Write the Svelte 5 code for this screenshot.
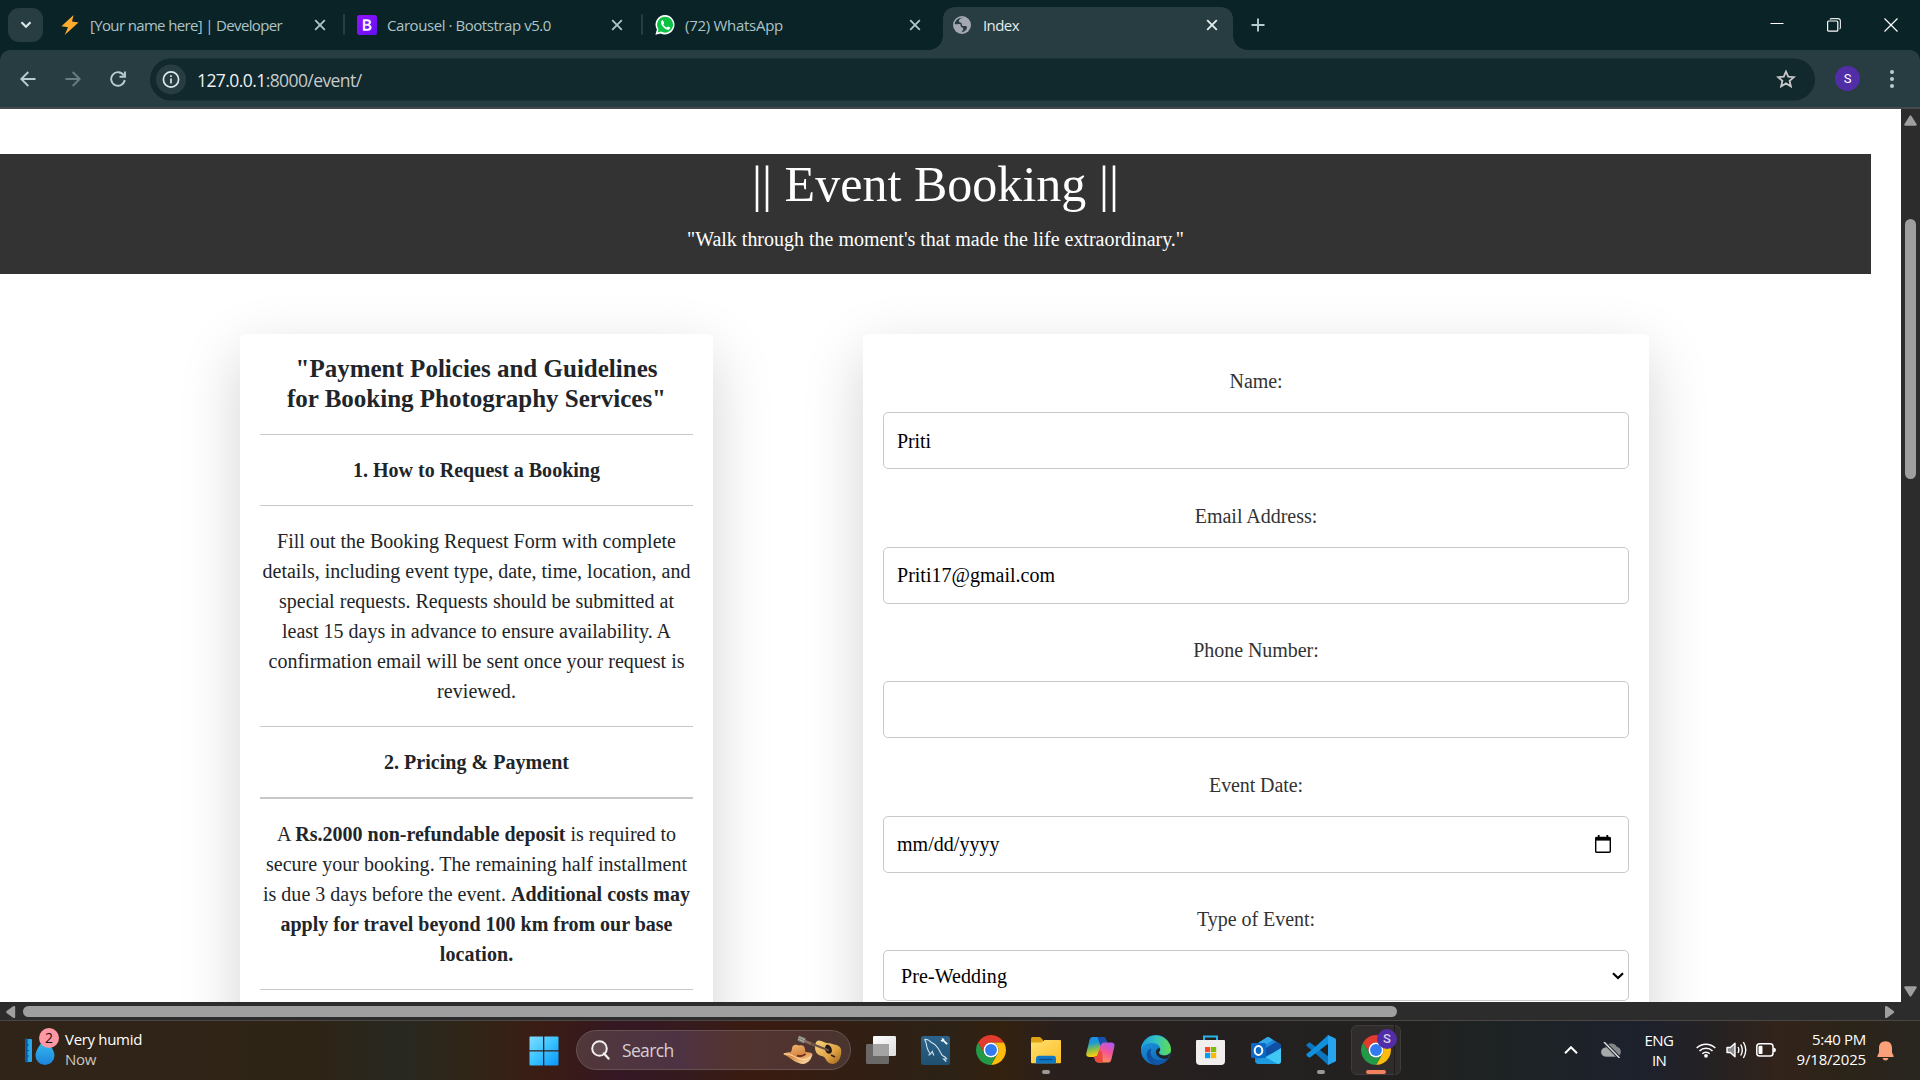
<script>
  const tabs = [
    { icon: 'bolt', title: '[Your name here] | Developer', width: 192 },
    { icon: 'bootstrap', title: 'Carousel · Bootstrap v5.0', width: 164 },
    { icon: 'whatsapp', title: '(72) WhatsApp', width: 98 },
    { icon: 'globe', title: 'Index', width: 36, active: true }
  ];

  const fields = [
    { label: 'Name:', value: 'Priti', labelWidth: 53, width: 34 },
    { label: 'Email Address:', value: 'Priti17@gmail.com', labelWidth: 122.5, width: 158 },
    { label: 'Phone Number:', value: '', labelWidth: 125.5, width: 0 },
    { label: 'Event Date:', value: 'mm/dd/yyyy', kind: 'date', labelWidth: 94, width: 102.5 },
    { label: 'Type of Event:', value: 'Pre-Wedding', kind: 'select', labelWidth: 118, width: 106 }
  ];

  const apps = ['taskview', 'mysql', 'chrome', 'folder', 'copilot', 'edge', 'store', 'outlook', 'vscode', 'chromeActive'];

  // Spreads letter spacing so a label fills its intended width.
  function fit(node, width) {
    if (!width) return;
    const natural = node.getBoundingClientRect().width;
    const count = node.textContent.length;
    if (natural && count > 1) node.style.letterSpacing = `${(width - natural) / count}px`;
  }
</script>

{#snippet chromeLogo()}
  <svg width="30" height="30" viewBox="2 2 44 44">
    <path fill="#e33b2e" d="M24 13H43.05A22 22 0 0 0 4.95 13L14.47 29.5A11 11 0 0 1 24 13Z" />
    <path fill="#fbbc0c" d="M33.53 29.5 24 46A22 22 0 0 0 43.05 13H24A11 11 0 0 1 33.53 29.5Z" />
    <path fill="#229a48" d="M14.47 29.5 4.95 13A22 22 0 0 0 24 46L33.53 29.5A11 11 0 0 1 14.47 29.5Z" />
    <circle cx="24" cy="24" r="11" fill="#fff" />
    <circle cx="24" cy="24" r="8.7" fill="#2f7bef" />
  </svg>
{/snippet}

{#snippet favicon(name)}
  {#if name === 'bolt'}
    <svg width="20" height="20" viewBox="0 0 20 20"><path d="M13.6 0 1.5 11.2l6.500 1L4.7 20 18.500 7.600l-6.500-1z" fill="#ffab2d" /></svg>
  {:else if name === 'bootstrap'}
    <svg width="20" height="20" viewBox="0 0 20 20">
      <defs><linearGradient id="bs" x1="0" y1="0" x2="1" y2="1"><stop offset="0" stop-color="#9013fe" /><stop offset="1" stop-color="#6610f2" /></linearGradient></defs>
      <rect width="20" height="20" rx="2.5" fill="url(#bs)" />
      <path d="M6.2 4.6h4.5q3.1 0 3.1 2.6 0 1.9-1.8 2.5 2.3.5 2.3 2.8 0 3-3.5 3H6.2zM7.9 6v3.2h2.3q1.9 0 1.9-1.6T10.3 6zM7.900 10.500V14h2.700q2 0 2-1.800 0-1.700-2.100-1.700z" fill="#fff" stroke="#fff" stroke-width=".5" />
    </svg>
  {:else if name === 'whatsapp'}
    <svg width="20" height="20" viewBox="0 0 20 20">
      <path d="M10.2 0a9.6 9.6 0 0 0-8.3 14.5L.4 19.8l5.1-1.4A9.7 9.7 0 1 0 10.2 0z" fill="#fff" />
      <path d="M10.2 1.7a8 8 0 0 0-6.7 12.5l-.8 3.2 3.3-.8a8 8 0 1 0 4.2-14.9z" fill="#0bc144" />
      <path d="M6.9 5.5c-1.5 1-1.4 3 .5 5.500 2 2.600 4.900 4.300 6.600 3.500 1.200-.6 1.300-1.700 1.100-2l-2-1.100c-.4-.1-1 1.200-1.400 1-1.500-.6-2.600-1.700-3.300-3 0-.5.9-.8.7-1.400l-.9-2.200c-.2-.5-.8-.6-1.300-.3z" fill="#fff" />
    </svg>
  {:else}
    <svg width="18" height="18" viewBox="0 0 18 18">
      <circle cx="9" cy="9" r="9" fill="#a3a8b3" />
      <path d="M10.300 1.900c-3 .2-4.600 1.700-4.400 3.300.2 1.300 1.900 1 2.700 2 .8 1.200-.3 1.800.8 2.500 1.300.8 3-.3 4.200.7 1.100 1-.2 3-1.300 4.200-.9 1-2.600 1.600-3.900 1.600 1-1.300 2-2.100 1.800-3.500-.1-1.300-1.500-1-2.200-1.900-.8-1 .1-2.200-1-2.700C5.600 7.400 3.300 8.700 1.700 8.100 2 4.600 5.500 1 10.300 1.900z" fill="#283d41" />
    </svg>
  {/if}
{/snippet}

{#snippet appIcon(name)}
  {#if name === 'taskview'}
    <svg width="30" height="28" viewBox="0 0 30 28">
      <defs><linearGradient id="tv" x2="1" y2="1"><stop stop-color="#fff" /><stop offset="1" stop-color="#dcdcdc" /></linearGradient></defs>
      <rect x="0" y="8" width="23" height="20" rx="1.200" fill="#6b6967" />
      <rect x="7" y="0" width="23" height="20" rx="1.200" fill="url(#tv)" />
      <rect x="7" y="8" width="16" height="12" fill="#a4a3a3" />
    </svg>
  {:else if name === 'mysql'}
    <svg width="29" height="29" viewBox="0 0 29 29">
      <defs><linearGradient id="my" x2="0" y2="1"><stop stop-color="#2c638b" /><stop offset="1" stop-color="#1f506f" /></linearGradient></defs>
      <rect width="29" height="29" rx="2.500" fill="url(#my)" />
      <path d="M9.500 18c-2.800-3-3.700-6.600-4.300-10.500C4.800 5.500 3.200 3.600 4 3.300c2.800.2 4.800 1.300 6 3 4.500 1.700 7.300 5.500 9.500 10.200l1.800 3c1.900.8 3.500 1.800 4.400 3.200l-3.200.3 2.800 2.500M9.500 18l-2 1.200M9.500 18l1.800-2.500 1.500 4" fill="none" stroke="#d4e6f0" stroke-width="1.100" />
      <path d="M20.500 2.500c1.600-.9 2.800.2 3 1.900l3.300 3.100-1.300 1.300-3.300-3.200c-1.400.3-2.400-.6-2.500-1.700l1.600.4z" fill="#fff" />
    </svg>
  {:else if name === 'chrome'}
    {@render chromeLogo()}
  {:else if name === 'folder'}
    <svg width="30" height="27" viewBox="0 0 30 27">
      <defs><linearGradient id="fo" x2="1" y2="1"><stop stop-color="#ffe06f" /><stop offset="1" stop-color="#fdbd28" /></linearGradient></defs>
      <path d="M0 1.500Q0 0 1.500 0H9l3 3v3H0z" fill="#dfa213" />
      <path d="M0 5.500h10.500L13.500 3H29q1 0 1 1v21.500q0 .8-1 .8H1q-1 0-1-1z" fill="url(#fo)" />
      <path d="M5 26.500v-4.700q0-3 3-3h14q3 0 3 3v4.700z" fill="#1077c5" />
      <path d="M8.500 22.500h13" stroke="#0a4d87" stroke-width="1.300" />
    </svg>
  {:else if name === 'copilot'}
    <svg width="29" height="26" viewBox="0 0 29 26">
      <defs>
        <linearGradient id="c1" x2=".2" y2="1"><stop stop-color="#1c8df5" /><stop offset=".35" stop-color="#1b9ad0" /><stop offset=".65" stop-color="#86bd4c" /><stop offset="1" stop-color="#ffd00c" /></linearGradient>
        <linearGradient id="c2" x1=".8" x2=".3" y2="1"><stop stop-color="#b057f4" /><stop offset=".45" stop-color="#f25593" /><stop offset="1" stop-color="#ff9a52" /></linearGradient>
      </defs>
      <path d="M6.500 0h10q2.800 0 3.600 3l.8 2.500h-3q-2 0-2.600 2l-3 9.500q-1 3-4 3H3.500Q-.5 20 .4 16L3.500 3Q4.300 0 6.500 0z" fill="url(#c1)" />
      <path d="M11.500 0h5q2.800 0 3.600 3l.8 2.500h-3q-2 0-2.600 2l-.7 2z" fill="#164fb0" />
      <path d="M22.500 25.500h-10q-2.800 0-3.600-3L8 19.500h1q2 0 2.600-2l3-9q1-3 4-3h6.500q4.200 0 3.200 4.200L25.500 22q-.8 3.500-3 3.500z" fill="url(#c2)" />
      <path d="M17 25.500h-4.500q-2.800 0-3.600-3L8 19.500h1q2 0 2.600-2l1.500-4 3 1z" fill="#ea493e" />
    </svg>
  {:else if name === 'edge'}
    <svg width="30" height="30" viewBox="0 0 30 30">
      <defs>
        <linearGradient id="e1" x2="1"><stop stop-color="#199bd9" /><stop offset=".5" stop-color="#35c3c2" /><stop offset="1" stop-color="#62df48" /></linearGradient>
        <linearGradient id="e2" x2=".5" y2="1"><stop stop-color="#1d9fe3" /><stop offset="1" stop-color="#0f67b8" /></linearGradient>
      </defs>
      <circle cx="15" cy="15" r="15" fill="url(#e2)" />
      <path d="M1.500 9A15 15 0 0 1 30 14.500c0 4-3 6-6.500 6-3 0-5.500-1.200-5.500-3 0-1 1.200-1.500 1.200-3.500 0-3-3-6-8-6C6.500 8 2.500 10 0 14.500c0-2 .5-4 1.500-5.500z" fill="url(#e1)" />
      <path d="M10.500 13.500c-3 5 1 12 8 12 3.500 0 6.500-1 8.500-2.500A15 15 0 0 1 15 30C9 29 5.500 24 5.800 19c.2-3 2-5 4.700-5.500z" fill="#10509e" />
      <path d="M19.200 14c0 2-1.200 2.500-1.200 3.500 0 1.800 2.500 3 5.500 3 2.500 0 5-1.200 6-3.200-.5 3-1.500 4.500-2.800 6-3 1.200-6.500.5-9-1.500-4-2.500-3.500-7.800.5-9z" fill="#21252a" />
      <path d="M10.300 22.500c2 3 5 3.500 8.200 3.300 3-.2 6.500-1 8.500-2.800A15 15 0 0 1 17 29.800c-4-1-6-4-6.700-7.300z" fill="#1158a7" />
    </svg>
  {:else if name === 'store'}
    <svg width="29" height="30" viewBox="0 0 29 30">
      <path d="M8 6V1.500h13V6" fill="none" stroke="#28b4e8" stroke-width="2" />
      <path d="M0 6q0-1 1-1h27q1 0 1 1v20q0 4-4 4H4q-4 0-4-4z" fill="#f0efee" />
      <path d="M9 12h5.200v5.200H9z" fill="#f04d26" /><path d="M15 12h5.200v5.200H15z" fill="#80bb03" />
      <path d="M9 18h5.200v5.200H9z" fill="#069fe8" /><path d="M15 18h5.200v5.200H15z" fill="#fdb900" />
    </svg>
  {:else if name === 'outlook'}
    <svg width="30" height="27" viewBox="0 0 30 27">
      <path d="M4 8 16 .3q1-.5 2 0L29 7q1 .6 1 2v15q0 3-3 3H8q-4 0-4-4z" fill="#1b87d8" />
      <path d="M4 8 16 .3q1-.5 2 0L22 3 8 12z" fill="#32a8e8" />
      <path d="m10 14 15-9 4 2q1 .6 1 2v3L15 19z" fill="#0f4fa5" />
      <path d="M12 22 30 11v13q0 3-3 3H8z" fill="#40c7f4" />
      <path d="m14 20 13 7H8q-3 0-4-3z" fill="#1e9ae0" />
      <rect y="6" width="15" height="15" rx="1.500" fill="#0b68c4" />
      <ellipse cx="7.500" cy="13.500" rx="3.800" ry="4.400" fill="none" stroke="#fff" stroke-width="2" />
    </svg>
  {:else if name === 'vscode'}
    <svg width="30" height="30" viewBox="0 0 30 30">
      <path d="M22 0 6 15 22 30 22 22 13 15 22 8z" fill="#0b7bc4" />
      <path d="m1.500 8.500 1.600-.9q.7-.3 1.300.2L23 22v7.500L.6 11q-.8-.7 0-1.300z" fill="#0b75bd" />
      <path d="m1.500 21.500 1.600.9q.7.300 1.300-.2L23 8V.5L.6 19q-.8.700 0 1.300z" fill="#1190dd" />
      <path d="M22 0 29 3.200q1 .5 1 1.500v20.600q0 1-1 1.500L22 30z" fill="#28a4ef" />
    </svg>
  {:else}
    <span class="chrome-badged">{@render chromeLogo()}<span class="badge profile">S</span></span>
  {/if}
{/snippet}

<div class="screen">
  <header class="tabstrip">
    <span class="tab-search">
      <svg width="12" height="8" viewBox="0 0 12 8"><path d="m1.500 1.300 4.500 4.500 4.500-4.500" fill="none" stroke="#dbe6e7" stroke-width="2.200" /></svg>
    </span>
    <div class="tabs">
      {#each tabs as tab}
        <div class="tab" class:active={tab.active}>
          <span class="fav">{@render favicon(tab.icon)}</span>
          <span class="tab-title"><span use:fit={tab.width}>{tab.title}</span></span>
          <svg class="close" width="12" height="12" viewBox="0 0 12 12"><path d="m1.200 1.200 9.600 9.600m0-9.600-9.600 9.600" stroke="currentColor" stroke-width="1.900" /></svg>
        </div>
      {/each}
    </div>
    <svg class="plus" width="14" height="14" viewBox="0 0 14 14"><path d="M7 .5v13M.5 7h13" stroke="#b5cbce" stroke-width="1.900" /></svg>
    <div class="window-controls">
      <svg width="14" height="14" viewBox="0 0 14 14"><path d="M.5 5.500h13" stroke="#fff" stroke-width="1" /></svg>
      <svg width="14" height="14" viewBox="0 0 14 14"><rect x=".6" y="3" width="10.200" height="10.200" rx="1" fill="none" stroke="#fff" stroke-width="1.200" /><path d="M3 1.500Q3.300.6 4.500.6H11Q13.400.6 13.400 3v6.500q0 1.200-.9 1.500" fill="none" stroke="#e5ebeb" stroke-width="1.100" /></svg>
      <svg width="14" height="14" viewBox="0 0 14 14"><path d="m.5.500 13 13m0-13-13 13" stroke="#fff" stroke-width="1.200" /></svg>
    </div>
  </header>

  <div class="toolbar-wrap">
    <div class="toolbar">
      <svg width="16" height="16" viewBox="0 0 16 16"><path d="M15.500 8H1.500M8.300 1 1.300 8l7 7" fill="none" stroke="#b7cdd0" stroke-width="1.900" /></svg>
      <svg width="16" height="16" viewBox="0 0 16 16"><path d="M.5 8h14M7.700 1l7 7-7 7" fill="none" stroke="#6a7d80" stroke-width="1.900" /></svg>
      <svg width="16" height="16" viewBox="0 0 16 16"><path d="M13.700 4.300A6.800 6.800 0 1 0 14.700 9M15 .5v5.300H9.500" fill="none" stroke="#b7cdd0" stroke-width="1.900" /></svg>
      <div class="omnibox">
        <span class="site-info">
          <svg width="18" height="18" viewBox="0 0 18 18"><circle cx="9" cy="9" r="7.600" fill="none" stroke="#dce7e8" stroke-width="1.700" /><path d="M9 8v5M9 4.800v1.700" stroke="#dce7e8" stroke-width="1.700" /></svg>
        </span>
        <span class="url"><span use:fit={164.5}><b>127.0.0.1</b>:8000/event/</span></span>
        <svg width="20" height="19" viewBox="0 0 20 19"><path d="m10 2 2.200 5.200 5.700.5-4.300 3.700 1.300 5.500-4.900-3-4.900 3 1.300-5.500L2.100 7.700l5.700-.5z" fill="none" stroke="#c7c9ca" stroke-width="1.800" /></svg>
      </div>
      <span class="avatar">S</span>
      <svg class="dots" width="6" height="20" viewBox="0 0 6 20"><g fill="#b7cdd0"><circle cx="3" cy="3" r="2" /><circle cx="3" cy="10" r="2" /><circle cx="3" cy="17" r="2" /></g></svg>
    </div>
  </div>

  <div class="browser-body">
    <main class="page">
      <section class="banner">
        <h1><span use:fit={367}>|| Event Booking ||</span></h1>
        <p><span use:fit={497}>"Walk through the moment's that made the life extraordinary."</span></p>
      </section>
      <div class="columns">
        <article class="card policy">
          <h2><span use:fit={362}>"Payment Policies and Guidelines</span><br /><span use:fit={379}>for Booking Photography Services"</span></h2>
          <hr />
          <h3><span use:fit={247}>1. How to Request a Booking</span></h3>
          <hr />
          <p>
            <span use:fit={399}>Fill out the Booking Request Form with complete</span><br />
            <span use:fit={428}>details, including event type, date, time, location, and</span><br />
            <span use:fit={395}>special requests. Requests should be submitted at</span><br />
            <span use:fit={389}>least 15 days in advance to ensure availability. A</span><br />
            <span use:fit={416}>confirmation email will be sent once your request is</span><br />
            <span use:fit={79}>reviewed.</span>
          </p>
          <hr />
          <h3><span use:fit={185}>2. Pricing &amp; Payment</span></h3>
          <hr class="thick" />
          <p>
            <span use:fit={399}>A <strong>Rs.2000 non-refundable deposit</strong> is required to</span><br />
            <span use:fit={421}>secure your booking. The remaining half installment</span><br />
            <span use:fit={427}>is due 3 days before the event. <strong>Additional costs may</strong></span><br />
            <strong use:fit={392}>apply for travel beyond 100 km from our base</strong><br />
            <strong use:fit={73.5}>location.</strong>
          </p>
          <hr />
        </article>

        <form class="card form">
          {#each fields as field}
            <div class="group">
              <span class="label"><span use:fit={field.labelWidth}>{field.label}</span></span>
              <div class="input {field.kind ?? 'text'}">
                <span use:fit={field.width}>{field.value}</span>
                {#if field.kind === 'date'}
                  <svg width="16" height="18" viewBox="0 0 16 18"><path d="M3.700 0v3M12.300 0v3" stroke="#000" stroke-width="1.800" /><rect x=".7" y="2.500" width="14.600" height="14.700" rx="1" fill="none" stroke="#000" stroke-width="1.400" /><path d="M.7 2h14.600v3.600H.7z" /></svg>
                {:else if field.kind === 'select'}
                  <svg width="12" height="8" viewBox="0 0 12 8"><path d="m1 1.200 5 4.800 5-4.800" fill="none" stroke="#000" stroke-width="2.200" /></svg>
                {/if}
              </div>
            </div>
          {/each}
        </form>
      </div>
    </main>
    <div class="vscroll">
      <svg width="13" height="11" viewBox="0 0 13 11"><path d="M5.500 1q1-1.300 2 0l5 8q.8 1.700-1 1.700h-10q-1.800 0-1-1.700z" fill="#9f9f9f" /></svg>
      <span class="vthumb"></span>
      <svg width="13" height="11" viewBox="0 0 13 11"><path d="M5.500 10q1 1.300 2 0l5-8q.8-1.700-1-1.700h-10Q-.3.300.5 2z" fill="#9f9f9f" /></svg>
    </div>
  </div>
  <div class="hscroll">
    <svg width="10" height="12" viewBox="0 0 10 12"><path d="M.6 5q-1 1 0 2l6.500 4.700Q9.200 12.500 9.200 11V1Q9.200-.5 7.100.3z" fill="#9f9f9f" /></svg>
    <span class="hthumb"></span>
    <svg class="hright" width="10" height="12" viewBox="0 0 10 12"><path d="M8.600 5q1 1 0 2l-6.500 4.700Q0 12.500 0 11V1Q0-.5 2.100.3z" fill="#9f9f9f" /></svg>
  </div>

  <footer class="taskbar">
    <div class="weather">
      <div class="weather-icon">
        <svg width="30" height="28" viewBox="0 0 30 28">
          <defs><linearGradient id="dr" x2="0" y2="1"><stop stop-color="#3cc6f2" /><stop offset="1" stop-color="#1c83dc" /></linearGradient></defs>
          <rect x="0" y="2" width="7" height="23" rx="1" fill="#29a7e6" /><path d="M.8 2h1.200v23H.8zM2 8h2M2 13.500h2M2 19h2" fill="#0b579b" stroke="#0b579b" stroke-width="1.200" />
          <path d="M20 0C16 7 10.500 13 10.500 18.500a9.500 9.500 0 0 0 19 0C29.500 13 24 7 20 0z" fill="url(#dr)" />
        </svg>
        <span class="badge count">2</span>
      </div>
      <div class="weather-text"><span><span use:fit={77}>Very humid</span></span><span class="dim"><span use:fit={31}>Now</span></span></div>
    </div>
    <div class="dock">
      <svg class="start" width="30" height="30" viewBox="0 0 30 30">
        <defs><linearGradient id="wn" gradientUnits="userSpaceOnUse" x1="0" y1="0" x2="30" y2="30"><stop stop-color="#83deff" /><stop offset=".5" stop-color="#38c3ff" /><stop offset="1" stop-color="#0893fb" /></linearGradient></defs>
        <path d="M1.500.5H14v13.700H.5V1.500q0-1 1-1zM15.300.5h13.200q1 0 1 1v12.700H15.300zM.5 15.500H14v14H1.500q-1 0-1-1zM15.300 15.500h14.200v13q0 1-1 1H15.300z" fill="url(#wn)" />
      </svg>
      <div class="search">
        <svg width="19" height="20" viewBox="0 0 19 20"><circle cx="8.500" cy="8.500" r="7.300" fill="#8a7c80" fill-opacity=".35" stroke="#f2eeee" stroke-width="2" /><path d="m13 13.500 4.500 5" stroke="#f2eeee" stroke-width="2.400" stroke-linecap="round" /></svg>
        <span class="search-text"><span use:fit={51.5}>Search</span></span>
        <svg class="art" width="60" height="30" viewBox="0 0 60 30">
          <defs>
            <linearGradient id="ht" x2=".6" y2="1"><stop stop-color="#f4bd7c" /><stop offset=".6" stop-color="#d98b45" /><stop offset="1" stop-color="#f8cc93" /></linearGradient>
            <linearGradient id="gt" x2="1" y2="1"><stop stop-color="#f6d07e" /><stop offset=".6" stop-color="#dfa343" /><stop offset="1" stop-color="#9b5c1c" /></linearGradient>
          </defs>
          <path d="M18 4.500 43 15" stroke="#8e6a5a" stroke-width="2.600" />
          <path d="m16 .5 7 2.800-2 5.200-6.500-2.800z" fill="#7d7a74" /><path d="m15.500 2 6.500 2.800m-7.200-.8 6.400 2.700" stroke="#c6beb0" stroke-width=".8" />
          <path d="M32 12c0-3 1-6.500 4-6.500 3.500 0 5 2.500 8 2.500 3.500 0 4.500 1 7 1.500 4.500.5 7.800 3 7.300 7.500C58 22 56 28.500 50 29c-4 0-6.500-3-8-6-1.500-2.500-5-1.500-7.500-4-2-2-2.500-4.500-2.500-7z" fill="url(#gt)" />
          <path d="M44 9.500c3 .3 5.500 4 4.800 7-.6 2.500-3 2.800-4.800 1.500-2.500-2-2.800-7 0-8.500z" fill="#241a18" />
          <path d="m28 8.500 18 7" stroke="#675046" stroke-width="2.200" /><path d="m48 20 4 2" stroke="#382115" stroke-width="1.600" />
          <path d="M0 19c4-2 6-1.500 8-2 1.500-3 .5-6 3.500-7 2-.6 4 .8 6 .3 3.500-.8 4.500 2.200 5 6.700 3 .5 5.500 0 7 2-.5 4-3.500 9-9 10C13 29 7 22 0 19z" fill="url(#ht)" />
          <path d="M14 20.500c3 1.200 6 .5 8.500-1.500" fill="none" stroke="#73301c" stroke-width="2" /><path d="M1 19c8-1 13 6 20 5.500 3 0 5.500-1.500 7.500-4" fill="none" stroke="#ffe0b0" stroke-width="1" />
        </svg>
      </div>
      <div class="apps">
        {#each apps as app}
          <div class="app" class:current={app === 'chromeActive'} class:running={app === 'folder' || app === 'vscode'}>{@render appIcon(app)}</div>
        {/each}
      </div>
    </div>
    <div class="tray">
      <svg class="chev" width="14" height="8" viewBox="0 0 14 8"><path d="m1 7.200 6-6 6 6" fill="none" stroke="#fff" stroke-width="2" /></svg>
      <svg class="cloud" width="21" height="16" viewBox="0 0 21 16"><path d="M4.500 14.500a4.500 4.500 0 0 1-.3-9A6.500 6.500 0 0 1 16 5a4.900 4.900 0 0 1 .3 9.500z" fill="#858789" /><path d="M4 6c4 0 5.500 1.500 12 8.500H4.500C-1 14 0 6 4 6z" fill="#a7a9ab" /><path d="m3 0 15 15.500" stroke="#222733" stroke-width="3.500" /><path d="m3 0 15.500 16" stroke="#e0e1e2" stroke-width="1.400" /></svg>
      <div class="lang"><span><span use:fit={29}>ENG</span></span><span><span use:fit={14}>IN</span></span></div>
      <svg class="wifi" width="20" height="16" viewBox="0 0 20 16"><g fill="none" stroke="#fff" stroke-width="1.500"><path d="M.7 6a13.200 13.200 0 0 1 18.600 0M3.500 9a9.200 9.200 0 0 1 13 0M6.300 11.800a5.300 5.300 0 0 1 7.400 0" /></g><circle cx="10" cy="13.800" r="1.900" fill="#fff" /></svg>
      <svg class="volume" width="21" height="18" viewBox="0 0 21 18"><g fill="none" stroke="#fff" stroke-width="1.400"><path d="M1 6.500h3.300L9 2.300v13.400l-4.700-4.200H1z" fill="#8b8b90" stroke-linejoin="round" /><path d="M12 6q1.700 3 0 6M14.700 3.500q3.200 5.500 0 11M17.400 1q4.700 8 0 16" /></g></svg>
      <svg class="battery" width="20" height="14" viewBox="0 0 20 14"><rect x=".8" y=".8" width="16.200" height="12.200" rx="2.800" fill="none" stroke="#fff" stroke-width="1.500" /><rect x="2.500" y="2.800" width="4" height="8.200" rx="1" fill="#fff" /><path d="M17.300 4.500Q20 4.800 20 7t-2.700 2.500z" fill="#fff" /></svg>
      <div class="clock"><span><span use:fit={54}>5:40 PM</span></span><span><span use:fit={69.5}>9/18/2025</span></span></div>
      <svg class="bell" width="17" height="20" viewBox="0 0 17 20"><path d="M8.500.2c-4 0-6.500 2.800-6.500 6.500v4.800L.3 15q-.3 1 .7 1h15q1 0 .7-1L15 11.500V6.700C15 3 12.500.2 8.500.2z" fill="#fca07a" /><path d="M5.500 17h6q-.8 2.500-3 2.500t-3-2.500z" fill="#fca07a" /></svg>
    </div>
  </footer>
</div>

<style>
  :global(body) { margin: 0; overflow: hidden; }
  .screen { width: 1920px; height: 1080px; display: flex; flex-direction: column; overflow: hidden; background: #fff; font-family: "Open Sans", "Noto Sans", sans-serif; font-size: 15px; white-space: nowrap; }
  svg { display: block; flex: none; }

  .tabstrip { flex: none; height: 50px; background: #0a2327; display: flex; align-items: center; box-sizing: border-box; padding: 0 22px 0 8px; }
  .tab-search { width: 35px; height: 34px; border-radius: 11px; background: #283d41; display: flex; align-items: center; justify-content: center; }
  .tabs { display: flex; align-self: stretch; align-items: flex-end; margin-left: 12px; }
  .tab { position: relative; display: flex; align-items: center; box-sizing: border-box; height: 43px; padding: 0 19px 7px 4px; color: #adc3c6; }
  .tab:first-child { width: 289px; padding-left: 5px; padding-right: 18px; }
  .tab:nth-child(2) { width: 298px; padding-left: 13px; }
  .tab:nth-child(3) { width: 289px; padding-left: 13px; padding-right: 10px; }
  .tab:nth-child(-n+2)::after { content: ""; position: absolute; right: -1px; top: 7px; width: 2px; height: 21px; border-radius: 1px; background: #283d41; }
  .tab.active { width: 290px; padding: 0 15px 7px 10px; margin-left: 12px; background: #283d41; border-radius: 12px 12px 0 0; color: #e2edee; }
  .tab.active::before, .tab.active::after { content: ""; position: absolute; bottom: 0; width: 14px; height: 14px; }
  .tab.active::before { left: -14px; background: radial-gradient(circle at 0 0, transparent 13.500px, #283d41 14px); }
  .tab.active::after { right: -14px; background: radial-gradient(circle at 100% 0, transparent 13.500px, #283d41 14px); }
  .fav { width: 20px; margin-right: 10px; }
  .tab-title { flex: 1; line-height: 20px; padding-bottom: 1px; }
  .plus { margin-left: 18px; }
  .window-controls { margin-left: auto; display: flex; gap: 43px; }

  .toolbar-wrap { flex: none; height: 59px; background: #0a2327; }
  .toolbar { height: 59px; box-sizing: border-box; border-bottom: 2px solid #45494d; border-radius: 10px 10px 0 0; background: #283d41; display: flex; align-items: center; padding: 0 25px 0 20px; gap: 29px; }
  .omnibox { flex: 1; height: 42px; box-sizing: border-box; border-radius: 21px; background: #11282d; display: flex; align-items: center; margin: 0 -9px 0 -12px; padding: 0 19px 0 6px; transform: translateY(.5px); }
  .toolbar > svg:nth-child(3) { margin-right: 7px; }
  .site-info { width: 30px; height: 30px; border-radius: 50%; background: #283d41; display: flex; align-items: center; justify-content: center; }
  .url { flex: 1; margin-left: 11px; font-size: 17.500px; line-height: 24px; color: #c7cbcb; }
  .url b { font-weight: 400; color: #eef2f2; }
  .avatar { width: 25px; height: 25px; border-radius: 50%; background: #512da8; color: #fff; font: 13px/25px Roboto, sans-serif; text-align: center; }

  .browser-body { flex: none; height: 893px; display: flex; overflow: hidden; }
  .page { width: 1901px; box-sizing: border-box; padding-top: 45px; overflow: hidden; background: #fff; font-family: "Liberation Serif", "Times New Roman", serif; font-size: 20px; line-height: 30px; color: #212529; }
  .banner { width: 1871px; height: 120px; background: #333; color: #fff; text-align: center; }
  h1, h2, h3, p { margin: 0; }
  h1 { font-size: 50px; line-height: 60px; font-weight: 400; margin-bottom: 10px; }
  .columns { display: flex; align-items: flex-start; gap: 150px; padding: 60px 0 0 240px; }
  .card { box-sizing: border-box; height: 900px; border-radius: 5px; background: #fff; box-shadow: 0 20px 60px rgba(0, 0, 0, .175); text-align: center; padding: 20px; }
  .policy { width: 473px; }
  h2 { font-size: 25px; line-height: 30px; }
  h3 { font-size: 20px; line-height: 30px; }
  hr { height: 1px; border: 0; margin: 20px 0; background: #c7c8c9; }
  hr.thick { height: 2px; }
  .form { width: 786px; padding-top: 32px; }
  .group { display: flex; flex-direction: column; height: 134.500px; }
  .label { height: 46px; color: #333; }
  .input { box-sizing: border-box; height: 57px; border: 1px solid #c9c9c9; border-radius: 5px; padding: .25px 12.500px 0 13px; color: #000; display: flex; align-items: center; justify-content: space-between; text-align: left; }
  .input.date { padding-right: 17px; }
  .input.select { height: 51px; padding: 0 4px 0 17px; }

  .vscroll { width: 19px; background: #2c2c2c; display: flex; flex-direction: column; align-items: center; box-sizing: border-box; padding: 6px 0 5px; }
  .vthumb { width: 11px; height: 260px; border-radius: 6px; background: #9f9f9f; margin: 93px 0 auto; }
  .hscroll { flex: none; height: 18px; background: #2c2c2c; display: flex; align-items: center; padding: 1px 25px 0 6px; box-sizing: border-box; }
  .hthumb { width: 1374px; height: 11px; border-radius: 6px; background: #9f9f9f; margin: -1px 0 0 7px; }
  .hright { margin-left: auto; }

  .taskbar { flex: 1; box-sizing: border-box; border-top: 1px solid #4a4744; display: flex; color: #fff; background: linear-gradient(90deg, #302418 0, #2e2416 320px, #282821 400px, #302516 470px, #3b1c14 545px, #341724 620px, #351b1e 690px, #3b1b11 750px, #321f14 860px, #2c2216 950px, #34210f 1000px, #29201d 1060px, #242020 1250px, #212120 1430px, #1d2324 1500px, #1d212d 1640px, #262222 1720px, #33231a 1780px, #2b2419 1850px, #292520 1920px); }
  .weather { display: flex; width: 516px; padding: 7px 0 0 25px; box-sizing: border-box; }
  .weather-icon { position: relative; padding-top: 9px; width: 30px; height: 28px; }
  .badge { position: absolute; border-radius: 50%; width: 20px; height: 20px; text-align: center; line-height: 20px; }
  .count { left: 14px; top: 0; background: #ff98a4; color: #1b0d0e; font-size: 14px; }
  .weather-text { margin-left: 10px; display: flex; flex-direction: column; padding-top: 1px; }
  .weather-text > span, .lang > span, .clock > span { line-height: 20px; }
  .dim { color: #cbc5bf; }
  .dock { display: flex; padding-top: 9px; }
  .start { margin: 6px 17px 0 13px; }
  .search { width: 275px; height: 40px; border-radius: 20px; box-sizing: border-box; border: 1px solid #66534f; background: linear-gradient(90deg, #50373a, #50363f 40px, #4d3243 100px, #54342f 160px, #4d3330 240px, #49352f); display: flex; align-items: center; padding: 0 7px 0 14px; }
  .search-text { flex: 1; margin-left: 12px; font-size: 17.500px; line-height: 24px; color: #d8cfd1; }
  .apps { display: flex; margin: -5px 0 0 2px; }
  .app { position: relative; width: 55px; height: 50px; display: flex; align-items: center; justify-content: center; box-sizing: border-box; }
  .app.running::after, .app.current::after { content: ""; position: absolute; bottom: 1px; left: 50%; width: 8px; height: 4px; margin-left: -4px; border-radius: 2px; background: #9b9898; }
  .app.current { width: 50px; margin-left: 3px; border: 1px solid #403c3b; border-radius: 6px; background: #302c2b; }
  .app.current::before { content: ""; position: absolute; right: 0; top: -1px; bottom: -1px; width: 5px; border-left: 1px solid #1f1c1b; border-radius: 0 6px 6px 0; }
  .app.current::after { width: 20px; height: 4px; margin-left: -10px; bottom: 0; background: #f3805f; }
  .chrome-badged { position: relative; }
  .profile { left: 16px; top: -6px; background: #512da8; color: #d7cdec; font: 500 13px/20px Roboto, sans-serif; }
  .tray { display: flex; align-items: flex-start; margin-left: auto; padding-right: 26px; }
  .chev { margin: 25px 23px 0 0; }
  .cloud { margin: 21px 21px 0 0; }
  .lang { display: flex; flex-direction: column; align-items: center; padding-top: 9px; width: 32px; margin-right: 21px; }
  .wifi { margin: 21px 10px 0 0; }
  .volume { margin: 20px 9px 0 0; }
  .battery { margin: 22px 18px 0 0; }
  .clock { display: flex; flex-direction: column; align-items: flex-end; padding-top: 8px; width: 72px; margin-right: 11px; }
  .bell { margin-top: 20px; }
</style>
